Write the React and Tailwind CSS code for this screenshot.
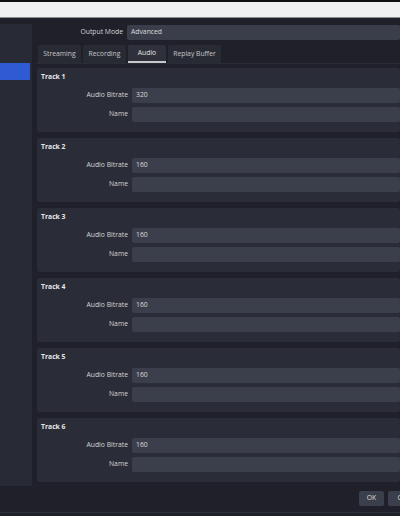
import React from 'react';

const tracks = [
  { id: 1, bitrate: '320' },
  { id: 2, bitrate: '160' },
  { id: 3, bitrate: '160' },
  { id: 4, bitrate: '160' },
  { id: 5, bitrate: '160' },
  { id: 6, bitrate: '160' },
];

const tabs = [
  { label: 'Streaming', w: 'w-[43px]' },
  { label: 'Recording', w: 'w-[43px]' },
  { label: 'Audio', w: 'w-[38px]', active: true },
  { label: 'Replay Buffer', w: 'w-[53px]' },
];

const Row = ({ label, value }) => (
  <div className="flex items-center h-[15px] gap-[4px]">
    <div className="w-[91px] shrink-0 text-right text-[#d4d4d6]">{label}</div>
    <div className="flex-1 h-full bg-[#3b3f4b] rounded-[2px] pl-[4px] flex items-center text-[#dcdcde]">
      {value}
    </div>
  </div>
);

const App = () => {
  return (
    <div
      className="w-[400px] h-[516px] bg-[#1f2029] flex flex-col overflow-hidden text-[6.8px] leading-none"
      style={{ fontFamily: '"Open Sans", "Noto Sans", sans-serif' }}
    >
      {/* window chrome */}
      <div className="h-[2px] bg-[#0f0f11]" />
      <div className="h-[15px] bg-[#f0f0f0]" />
      <div className="h-[1px] bg-[#8e8e8e]" />

      <div className="flex pt-[6px] h-[468px]">
        {/* sidebar */}
        <div className="w-[32px] h-[462px] bg-[#282b35] pt-[39px] shrink-0">
          <div className="w-[30px] h-[17px] bg-[#2f5bd2]" />
        </div>

        {/* main */}
        <div className="flex-1 ml-[4px] min-w-0">
          <div className="flex items-center h-[15px] gap-[4px] mt-[1px]">
            <div className="w-[87px] shrink-0 text-right text-[#d4d4d6]">Output Mode</div>
            <div className="flex-1 h-full bg-[#3a3e4a] rounded-[2px] pl-[4px] flex items-center text-[#dcdcde]">
              Advanced
            </div>
          </div>

          {/* tabs */}
          <div className="flex gap-[2px] pl-[2px] mt-[5px] h-[18px]">
            {tabs.map(t => (
              <div
                key={t.label}
                className={`${t.w} h-full flex items-center justify-center rounded-t-[2px] ${
                  t.active ? 'bg-[#2e313b] text-[#e2e2e4] border-b-2 border-[#c9c9cc]' : 'bg-[#292b34] text-[#c4c4c8]'
                }`}
              >
                {t.label}
              </div>
            ))}
          </div>

          {/* pane */}
          <div className="border-t border-[#2a2d36] pt-[4px] pl-[1px] flex flex-col gap-[6px]">
            {tracks.map(tr => (
              <div key={tr.id} className="h-[64px] bg-[#2a2d37] rounded-[3px] pt-[4px]">
                <div className="h-[11px] flex items-center pl-[4px] font-bold text-[#e6e6e8]">Track {tr.id}</div>
                <div className="mt-[5px]">
                  <Row label="Audio Bitrate" value={tr.bitrate} />
                </div>
                <div className="mt-[4px]">
                  <Row label="Name" value="" />
                </div>
              </div>
            ))}
          </div>
        </div>
      </div>

      {/* bottom buttons */}
      <div className="flex gap-[4px] pl-[359px] pt-[5px] h-[26px]">
        <div className="w-[25px] h-[15px] shrink-0 bg-[#3b3f4b] rounded-[2px] flex items-center justify-center text-[#dcdcde]">
          OK
        </div>
        <div className="w-[40px] h-[15px] shrink-0 bg-[#3b3f4b] rounded-[2px] flex items-center justify-center text-[#dcdcde]">
          Cancel
        </div>
      </div>
      <div className="h-[1px] bg-[#2e3039]" />
    </div>
  );
};

export default App;
